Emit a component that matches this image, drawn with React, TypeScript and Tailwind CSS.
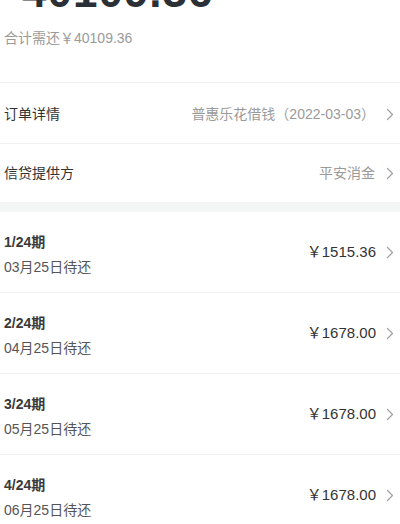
import React from 'react';

const font = { fontFamily: '"Liberation Sans", "Noto Sans CJK SC", sans-serif' };

const Chevron = () => (
  <svg width="8" height="13" viewBox="0 0 8 13" className="shrink-0">
    <path d="M1.5 1.5 L6.5 6.5 L1.5 11.5" fill="none" stroke="#a3a3a3" strokeWidth="1.3" strokeLinecap="round" strokeLinejoin="round" />
  </svg>
);

const installments = [
  { period: '1/24期', date: '03月25日待还', amount: '1515.36' },
  { period: '2/24期', date: '04月25日待还', amount: '1678.00' },
  { period: '3/24期', date: '05月25日待还', amount: '1678.00' },
  { period: '4/24期', date: '06月25日待还', amount: '1678.00' },
];

export default function App() {
  return (
    <div className="w-[400px] h-[524px] overflow-hidden bg-white" style={font}>
      {/* summary */}
      <div className="px-1 pb-[34px]">
        <div className="mt-[-30px] pl-[18px] text-[44px] leading-none font-bold text-[#2b2f36] tracking-[1px]">40109.36</div>
        <div className="mt-[14px] text-[14px] leading-[20px] text-[#9a9a9a]">合计需还￥40109.36</div>
      </div>
      <div className="border-t border-[#f0f0f0]" />

      <div className="flex items-center justify-between h-[61px] pl-1 pr-[6px] pt-[2px] border-b border-[#f0f0f0]">
        <span className="text-[14px] text-[#333]">订单详情</span>
        <div className="flex items-center gap-[11px]">
          <span className="text-[14px] text-[#9a9a9a]">普惠乐花借钱（2022-03-03）</span>
          <Chevron />
        </div>
      </div>
      <div className="flex items-center justify-between h-[58px] pl-1 pr-[6px]">
        <span className="text-[14px] text-[#333]">信贷提供方</span>
        <div className="flex items-center gap-[11px]">
          <span className="text-[14px] text-[#9a9a9a]">平安消金</span>
          <Chevron />
        </div>
      </div>
      <div className="h-[10px] bg-[#f4f5f5]" />

      {installments.map((it) => (
        <div key={it.period} className="flex items-center justify-between h-[81px] pl-1 pr-[6px] border-b border-[#f2f2f2]">
          <div className="flex flex-col gap-[5px] pt-[4px]">
            <span className="text-[14px] leading-[20px] font-semibold text-[#3a3a3a]">{it.period}</span>
            <span className="text-[14px] leading-[20px] text-[#555]">{it.date}</span>
          </div>
          <div className="flex items-center gap-[10px]">
            <span className="text-[15px] text-[#333]">￥{it.amount}</span>
            <Chevron />
          </div>
        </div>
      ))}
    </div>
  );
}
